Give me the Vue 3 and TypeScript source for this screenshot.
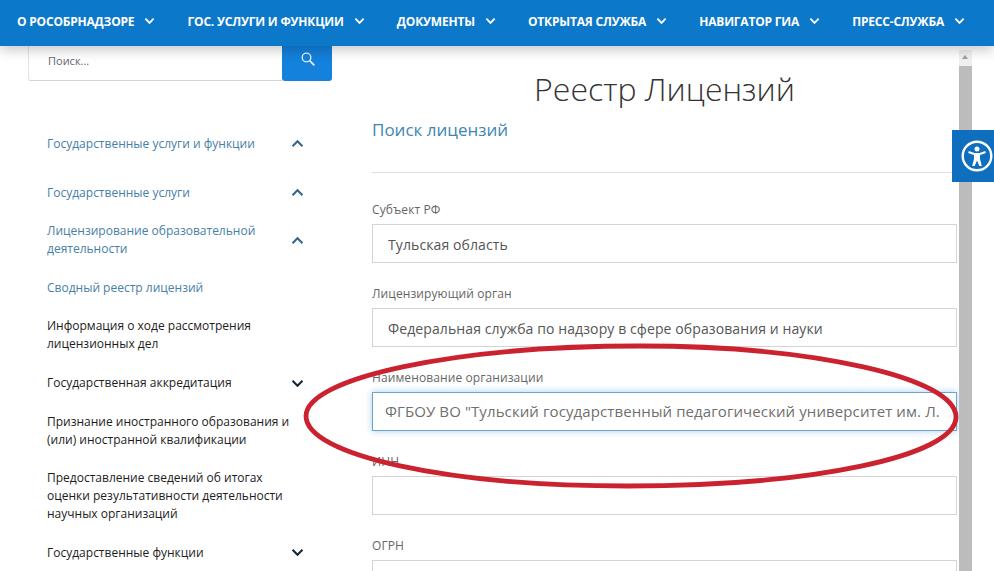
<script setup lang="ts">
interface NavItem {
  label: string
}

interface SideItem {
  label: string
  active?: boolean
  arrow?: 'up' | 'down'
  spaced?: boolean
}

interface Field {
  label: string
  value: string
  focused?: boolean
}

const navItems: NavItem[] = [
  { label: 'О РОСОБРНАДЗОРЕ' },
  { label: 'ГОС. УСЛУГИ И ФУНКЦИИ' },
  { label: 'ДОКУМЕНТЫ' },
  { label: 'ОТКРЫТАЯ СЛУЖБА' },
  { label: 'НАВИГАТОР ГИА' },
  { label: 'ПРЕСС-СЛУЖБА' },
]

const sideItems: SideItem[] = [
  { label: 'Государственные услуги и функции', active: true, arrow: 'up', spaced: true },
  { label: 'Государственные услуги', active: true, arrow: 'up' },
  { label: 'Лицензирование образовательной деятельности', active: true, arrow: 'up' },
  { label: 'Сводный реестр лицензий', active: true },
  { label: 'Информация о ходе рассмотрения лицензионных дел' },
  { label: 'Государственная аккредитация', arrow: 'down' },
  { label: 'Признание иностранного образования и (или) иностранной квалификации' },
  { label: 'Предоставление сведений об итогах оценки результативности деятельности научных организаций' },
  { label: 'Государственные функции', arrow: 'down' },
]

const fields: Field[] = [
  { label: 'Субъект РФ', value: 'Тульская область' },
  { label: 'Лицензирующий орган', value: 'Федеральная служба по надзору в сфере образования и науки' },
  {
    label: 'Наименование организации',
    value: 'ФГБОУ ВО "Тульский государственный педагогический университет им. Л.',
    focused: true,
  },
  { label: 'ИНН', value: '' },
  { label: 'ОГРН', value: '' },
]
</script>

<template>
  <div class="page">
    <header class="topbar">
      <a v-for="item in navItems" :key="item.label" class="nav-link" href="#">
        <span>{{ item.label }}</span>
        <svg class="nav-caret" viewBox="0 0 12 8" width="11" height="8">
          <path d="M1.500 1.500 6 6l4.500-4.500" fill="none" stroke="currentColor" stroke-width="2" />
        </svg>
      </a>
    </header>

    <div class="content">
      <aside class="sidebar">
        <div class="search">
          <input class="search-input" type="text" placeholder="Поиск..." />
          <button class="search-btn" type="button" aria-label="Поиск">
            <svg viewBox="0 0 14 14" width="14" height="14">
              <circle cx="5.500" cy="5.500" r="4.300" fill="none" stroke="#e6f6ff" stroke-width="1.300" />
              <path d="m8.700 8.700 4.600 4.600" stroke="#e6f6ff" stroke-width="1.700" />
            </svg>
          </button>
        </div>

        <nav class="side-nav">
          <a
            v-for="item in sideItems"
            :key="item.label"
            class="side-item"
            :class="{ 'side-item--active': item.active, 'side-item--spaced': item.spaced }"
            href="#"
          >
            <span class="side-label">{{ item.label }}</span>
            <svg v-if="item.arrow" class="side-arrow" viewBox="0 0 14 10" width="13" height="9">
              <path
                :d="item.arrow === 'up' ? 'M1.500 8 7 2.500 12.500 8' : 'M1.500 2 7 7.500 12.500 2'"
                fill="none"
                stroke="currentColor"
                stroke-width="2.200"
              />
            </svg>
          </a>
        </nav>
      </aside>

      <main class="main">
        <h1 class="title">Реестр Лицензий</h1>
        <h2 class="subtitle">Поиск лицензий</h2>
        <hr class="divider" />
        <div v-for="field in fields" :key="field.label" class="field">
          <label class="field-label">{{ field.label }}</label>
          <input
            class="field-input"
            :class="{ 'field-input--focus': field.focused }"
            type="text"
            readonly
            :value="field.value"
          />
        </div>
      </main>

      <div class="scrollbar">
        <div class="scroll-up"></div>
        <div class="scroll-thumb"></div>
      </div>
    </div>

    <button class="a11y" type="button" aria-label="Доступность">
      <svg viewBox="0 0 32 32" width="32" height="32">
        <circle cx="16" cy="16" r="14.300" fill="none" stroke="#fff" stroke-width="2.400" />
        <circle cx="16" cy="9" r="2.500" fill="#fff" />
        <path d="M7.500 12 13 14h6l5.500-2" fill="none" stroke="#fff" stroke-width="2" />
        <path d="M13 14h6v5l1.800 7h-2.400L16 20.500 13.600 26h-2.400l1.800-7z" fill="#fff" />
      </svg>
    </button>

    <svg class="ring" viewBox="0 0 994 571" width="994" height="571">
      <path
        d="M306 416C306 377.500 456 346 640 346C814 346 956 378 956 417C956 456 812 486 628 486C446 486 306 455 306 416Z"
        fill="none"
        stroke="#cb2230"
        stroke-width="4.800"
      />
    </svg>
  </div>
</template>

<style>
html,
body {
  margin: 0;
  background: #fff;
}
</style>

<style scoped>
.page {
  position: relative;
  width: 994px;
  height: 571px;
  overflow: hidden;
  background: #fff;
  font-family: 'Open Sans', 'Noto Sans', sans-serif;
}

.topbar {
  position: relative;
  z-index: 2;
  display: flex;
  align-items: center;
  justify-content: space-between;
  height: 46px;
  padding: 0 29px 4px 17px;
  box-sizing: border-box;
  background: #0c78c9;
  box-shadow: 0 4px 12px rgba(0, 0, 0, 0.22);
}

.nav-link {
  display: flex;
  align-items: center;
  gap: 10px;
  color: #fff;
  font-size: 12px;
  font-weight: 700;
  letter-spacing: -0.2px;
  text-decoration: none;
  white-space: nowrap;
}

.content {
  display: flex;
  height: 525px;
}

.sidebar {
  flex: 0 0 372px;
  box-sizing: border-box;
  padding-left: 28px;
}

.search {
  display: flex;
  width: 304px;
  height: 35px;
}

.search-input {
  flex: 1;
  min-width: 0;
  box-sizing: border-box;
  padding: 0 19px 6px;
  border: 0;
  border-bottom: 1px solid #d5d5d5;
  border-left: 1px solid #e4e4e4;
  border-radius: 0 0 0 3px;
  font-family: inherit;
  font-size: 11px;
  background: #fff;
}

.search-input::placeholder {
  color: #666;
  opacity: 1;
}

.search-btn {
  display: flex;
  align-items: center;
  justify-content: center;
  width: 50px;
  padding: 0 0 9px 2px;
  border: 0;
  border-radius: 0 0 3px 3px;
  background: #1481dc;
}

.side-nav {
  display: flex;
  flex-direction: column;
  gap: 20.6px;
  margin-top: 53.7px;
  margin-left: 19px;
}

.side-item {
  display: flex;
  align-items: center;
  justify-content: space-between;
  width: 257px;
  color: #1c1c1c;
  font-size: 12px;
  line-height: 18px;
  text-decoration: none;
}

.side-item--active {
  color: #4680a8;
}

.side-item--spaced {
  margin-bottom: 10.4px;
}

.side-label {
  width: 245px;
}

.side-arrow {
  flex: none;
  color: #0f2538;
}

.side-item--active .side-arrow {
  color: #2f6590;
}

.main {
  flex: 0 0 585px;
  min-width: 0;
}

.title {
  margin: 21px 0 0;
  color: #333;
  font-size: 32px;
  font-weight: 300;
  line-height: 44px;
  text-align: center;
  white-space: nowrap;
}

.subtitle {
  margin: 7px 0 0;
  color: #3f86b2;
  font-size: 17px;
  font-weight: 400;
  line-height: 24px;
}

.divider {
  margin: 30px 0 28px;
  border: 0;
  border-top: 1px solid #dedede;
}

.field {
  display: flex;
  flex-direction: column;
  margin-bottom: 22px;
}

.field-label {
  height: 18px;
  margin-bottom: 5px;
  color: #666;
  font-size: 12px;
  letter-spacing: 0.1px;
  line-height: 18px;
}

.field-input {
  box-sizing: border-box;
  width: 100%;
  height: 39px;
  padding: 2px 15px 0;
  border: 1px solid #d4d4d4;
  font-family: inherit;
  font-size: 14px;
  letter-spacing: 0.1px;
  color: #555;
  background: #fff;
  outline: none;
}

.field-input--focus {
  padding: 0 12px 2px;
  border-color: #6ea3cc;
  box-shadow: 0 0 7px rgba(102, 175, 233, 0.6);
  color: #6f6f6f;
  font-size: 15px;
}

.scrollbar {
  display: flex;
  flex-direction: column;
  flex: none;
  width: 13px;
  margin: 4px 0 0 2px;
}

.scroll-up {
  position: relative;
  height: 16px;
  background: #f0f0f0;
}

.scroll-up::after {
  content: '';
  position: absolute;
  top: 5px;
  left: 3px;
  border-right: 3.500px solid transparent;
  border-bottom: 4px solid #a0a0a0;
  border-left: 3.500px solid transparent;
}

.scroll-thumb {
  flex: 1;
  background: #bcbcbc;
}

.a11y {
  position: absolute;
  top: 130px;
  right: 0;
  z-index: 3;
  display: flex;
  align-items: center;
  justify-content: flex-start;
  width: 42px;
  height: 52px;
  padding: 0 0 0 9px;
  border: 0;
  background: #0f6fbf;
}

.a11y svg {
  flex: none;
}

.ring {
  position: absolute;
  top: 0;
  left: 0;
  z-index: 4;
  pointer-events: none;
}
</style>
